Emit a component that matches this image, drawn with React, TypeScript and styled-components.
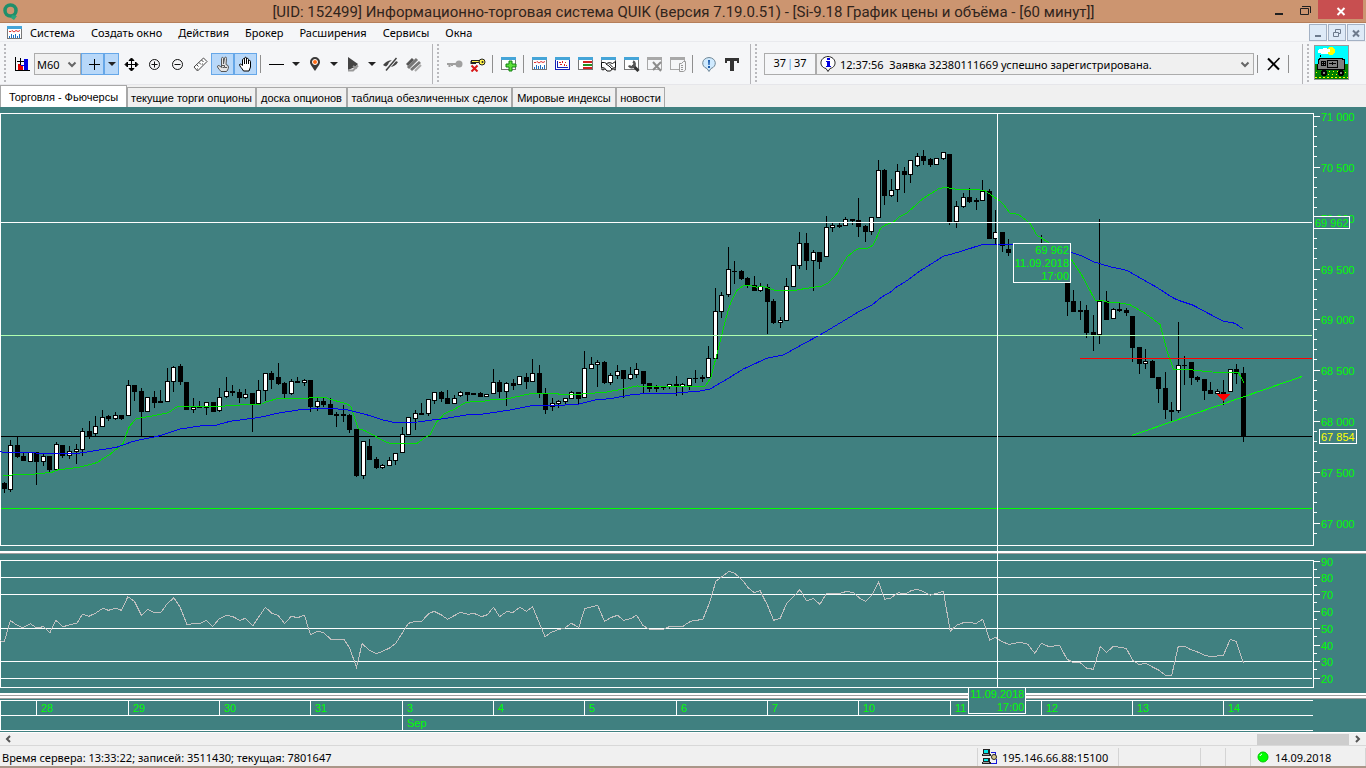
import React from "react";
import styled, { createGlobalStyle, css } from "styled-components";

const teal = "#408080";
const lime = "#00ff00";

const GlobalStyle = createGlobalStyle`
  * { box-sizing: border-box; }
  body { margin: 0; background: #f0f0f0; font-family: "Noto Sans", "Open Sans", sans-serif; font-size: 11px; color: #000; }
  button, select { font: inherit; color: inherit; margin: 0; }
`;

/* ---------- window frame ---------- */

const Window = styled.div`
  display: flex;
  flex-direction: column;
  min-height: 100vh;
  border-bottom: 2px solid #aa9688;
`;

const TitleBar = styled.header`
  display: flex;
  align-items: flex-start;
  height: 23px;
  padding: 0 3px;
  background: #cc9570;
  border-bottom: 1px solid #b57e5a;
`;

const TitleText = styled.h1`
  flex: 1;
  margin: 0;
  padding-left: 82px;
  text-align: center;
  white-space: nowrap;
  font-family: Roboto, "Open Sans", sans-serif;
  font-size: 15px;
  font-weight: 400;
  line-height: 24px;
  color: #30241c;
`;

const LogoIcon = styled.svg`
  width: 16px;
  height: 17px;
  margin-top: 3px;
`;

const CaptionButton = styled.button<{ $close?: boolean }>`
  width: ${(p) => (p.$close ? 45 : 26)}px;
  height: 19px;
  padding: 0;
  border: 0;
  color: ${(p) => (p.$close ? "#fff" : "#202020")};
  background: ${(p) => (p.$close ? "#c84f50" : "transparent")};
  svg { display: block; margin: 0 auto; }
`;

const MenuBar = styled.nav`
  display: flex;
  align-items: center;
  height: 19px;
  padding: 1px 1px 0 7px;
  background: #f5f6f8;
  border-bottom: 1px solid #e9eaee;
`;

const MenuLabel = styled.button`
  padding: 0;
  margin-left: 16px;
  border: 0;
  background: none;
  line-height: 18px;
  white-space: nowrap;
  &:first-of-type { margin-left: 7px; }
`;

const MdiButtons = styled.div`
  display: flex;
  gap: 1px;
  margin-left: auto;
`;

const MdiButton = styled.button`
  width: 18px;
  height: 17px;
  padding: 0;
  border: 1px solid #a3b1c4;
  background: #deeaf7;
  svg { display: block; margin: 0 auto; }
`;

/* ---------- toolbar ---------- */

const ToolBar = styled.div`
  display: flex;
  height: 43px;
  padding-top: 2px;
  background: #f5f6f8;
  border-bottom: 1px solid #e6e6ea;
`;

const ToolGroup = styled.div<{ $grow?: boolean; $last?: boolean }>`
  display: flex;
  align-items: center;
  padding: 0 ${(p) => (p.$last ? 17 : p.$grow ? 9 : 7)}px 0 5px;
  border-right: ${(p) => (p.$last ? 0 : 1)}px solid #b4b4b8;
  flex: ${(p) => (p.$grow ? "1 1 0" : "none")};
  min-width: 0;
`;

const Grip = styled.span`
  flex: none;
  align-self: stretch;
  width: 2px;
  margin: 0 4px 0 -1px;
  background: repeating-linear-gradient(to bottom, #b9b9bd 0 2px, transparent 2px 4px);
`;

const ToolButton = styled.button<{ $active?: boolean; $narrow?: boolean }>`
  flex: none;
  display: flex;
  align-items: center;
  justify-content: center;
  width: ${(p) => (p.$narrow ? 15 : 23)}px;
  height: 22px;
  padding: 0;
  border: 1px solid transparent;
  background: none;
  color: #222;
  ${(p) =>
    p.$active &&
    css`
      background: #b8d8f9;
      border-color: #66a7e8;
    `}
`;

const ToolDivider = styled.span`
  flex: none;
  width: 1px;
  height: 18px;
  margin: 0 4px 0 3px;
  background: #8f8f8f;
`;

const SelectBox = styled.div<{ $wide?: boolean }>`
  display: flex;
  align-items: center;
  flex: ${(p) => (p.$wide ? "1 1 0" : "0 0 47px")};
  min-width: 0;
  height: 22px;
  margin-left: ${(p) => (p.$wide ? 0 : 1)}px;
  padding: 0 3px 0 2px;
  border: 1px solid #acacac;
  background: #f0f0f0;
  select {
    flex: 1;
    min-width: 0;
    height: 20px;
    margin-left: ${(p) => (p.$wide ? 3 : 0)}px;
    padding: 0;
    border: 0;
    appearance: none;
    background: transparent;
  }
  svg { flex: none; }
`;

const Counter = styled.output`
  flex: none;
  width: 52px;
  height: 22px;
  margin-left: 3px;
  border: 1px solid #acacac;
  text-align: center;
  line-height: 18px;
  i { padding: 0 1px; color: #5a9be0; font-style: normal; }
`;

const MascotFrame = styled.div`
  width: 35px;
  height: 35px;
  margin-bottom: 3px;
  margin-left: 1px;
  border: 1px solid #999;
  svg { display: block; }
`;

/* ---------- tabs ---------- */

const TabStrip = styled.div`
  display: flex;
  align-items: flex-end;
  height: 22px;
`;

const Tab = styled.button<{ $w: number; $active?: boolean }>`
  flex: 0 0 ${(p) => p.$w}px;
  height: ${(p) => (p.$active ? 22 : 20)}px;
  padding: 0;
  border: 1px solid #a8a8a8;
  border-bottom: 0;
  background: ${(p) => (p.$active ? "#fff" : "#f0f0f0")};
  font-family: "Liberation Sans", sans-serif;
  font-size: 11px;
  line-height: 20px;
  white-space: nowrap;
`;

/* ---------- chart ---------- */

const ChartArea = styled.main`
  position: relative;
  background: ${teal};
  font-family: "Liberation Sans", sans-serif;
  font-size: 11px;
  color: ${lime};
`;

const Pane = styled.svg`
  display: block;
  width: 100%;
  height: auto;
`;

const Splitter = styled.div`
  height: 3px;
  background: #fff;
  border-bottom: 1px solid #a0a0a0;
`;

const DayRow = styled.div`
  display: grid;
  grid-template-columns: 36fr 92fr 91fr 91fr 92fr 91fr 91fr 92fr 91fr 91fr 92fr 91fr 91fr 91fr 90fr 53fr;
  margin-top: 1px;
`;

const MonthRow = styled.div`
  display: grid;
  grid-template-columns: 402fr 911fr 53fr;
  padding-bottom: 1px;
`;

const DateCell = styled.span<{ $last?: boolean }>`
  min-width: 0;
  height: ${(p) => (p.$last ? 16 : 15)}px;
  padding-left: 4px;
  line-height: 14px;
  border: solid #fff;
  border-width: ${(p) => (p.$last ? "1px 0 1px 1px" : "1px 0 0 1px")};
`;

const CrosshairLine = styled.span`
  position: absolute;
  left: 73%;
  top: 7px;
  bottom: 45px;
  width: 1px;
  background: #fff;
`;

const CrosshairTag = styled.div<{ $axis?: boolean }>`
  position: absolute;
  left: ${(p) => (p.$axis ? "70.9%" : "74.16%")};
  ${(p) => (p.$axis ? "bottom: 18px;" : "top: 136px;")}
  width: 58px;
  padding-right: 1px;
  border: 1px solid #fff;
  background: ${teal};
  text-align: right;
  line-height: 12px;
  span { display: block; }
  span + span { margin-top: 1px; }
`;

/* ---------- bottom ---------- */

const ScrollBar = styled.div`
  display: flex;
  align-items: center;
  height: 13px;
  padding: 0 4px;
  border-top: 1px solid #fff;
`;

const ScrollThumb = styled.span`
  flex: 0 0 92px;
  height: 11px;
  margin-left: auto;
  margin-right: 5px;
  background: #cdcdcd;
`;

const ScrollArrow = styled.button`
  display: flex;
  padding: 0;
  border: 0;
  background: none;
  color: #555;
`;

const StatusBar = styled.footer`
  display: flex;
  flex: 1;
  height: 21px;
  padding-top: 2px;
  border-top: 1px solid #d8d8d8;
`;

const StatusCell = styled.div<{ $w?: number }>`
  display: flex;
  align-items: center;
  gap: 4px;
  flex: ${(p) => (p.$w ? `0 0 ${p.$w}px` : "1 1 0")};
  padding: 0 2px;
  border-right: 1px solid #d4d4d4;
  white-space: nowrap;
`;

const AddressStatus = styled(StatusCell)`
  padding-left: 4px;
`;

const DateStatus = styled(StatusCell)`
  gap: 6px;
  padding-left: 6px;
`;

/* ---------- icons ---------- */

type IconProps = { size?: number; children: React.ReactNode };
const Icon = ({ size = 16, children }: IconProps) => (
  <svg width={size} height={size} viewBox={`0 0 ${size} ${size}`} fill="none" stroke="currentColor" aria-hidden="true">
    {children}
  </svg>
);

const Crisp = ({ children }: { children: React.ReactNode }) => <g shapeRendering="crispEdges" stroke="none">{children}</g>;

const WindowFrame = ({ gray }: { gray?: boolean }) => (
  <Crisp>
    <path fill={gray ? "#a8a8a8" : "#777"} d="M0 1h15v13H0z" />
    <path fill={gray ? "#f5f6f8" : "#fff"} d="M1 4h13v9H1z" />
    <path fill={gray ? "#a8a8a8" : "#45a5d8"} d="M0 1h15v3H0z" />
  </Crisp>
);

const PlotWindow = () => (
  <Icon>
    <WindowFrame />
    <path stroke="#e03030" d="M2 6.500h2l1-1 2 1.500 2-1.500 2 1 2-1" />
    <Crisp>
      <path fill="#1c6fc0" d="M2 11h1v2H2zM4 9h1v4H4zM6 10h1v3H6zM8 9h1v4H8zM10 11h1v2h-1zM12 9h1v4h-1z" />
    </Crisp>
  </Icon>
);

const Caret = () => (
  <Icon size={10}>
    <path d="M1 3h8L5 7z" fill="#222" stroke="none" />
  </Icon>
);

const Chevron = () => (
  <Icon size={10}>
    <path d="M1.500 3.500 5 7l3.500-3.500" stroke="#666" strokeWidth="2" />
  </Icon>
);

const BarsIcon = () => (
  <Icon>
    <Crisp>
      <path fill="#e00000" d="M4 8h3v6H4z" />
      <path fill="#0000e0" d="M10 3h4v11h-4zM7 9h3v1H7z" />
      <path fill="#e00000" d="M7 10h2v4H7z" />
      <path fill="#000" d="M1 1h1v14H1zM1 14h15v1H1zM3 5h7v1H3zM6 2h1v7H6z" />
    </Crisp>
  </Icon>
);

const PlusIcon = () => (
  <Icon>
    <Crisp>
      <path fill="#000" d="M4 8h11v1H4zM9 3h1v11H9z" />
    </Crisp>
  </Icon>
);

const MoveIcon = () => (
  <Icon>
    <path stroke="#000" d="M4 8.500h9M8.500 4v9" />
    <path stroke="#000" d="M4.500 6v5L2 8.500zM12.500 6v5L15 8.500zM6 4.500h5L8.500 2zM6 12.500h5L8.500 15z" fill="#000" />
    <path stroke="#f5f6f8" d="M6 6.500h2M9 6.500h2M6 10.500h2M9 10.500h2" />
  </Icon>
);

const LensIcon = ({ plus }: { plus?: boolean }) => (
  <Icon>
    <circle cx="8.500" cy="8.500" r="5" stroke="#111" />
    <path stroke="#111" d={plus ? "M5.500 8.500h6M8.500 5.500v6" : "M5.500 8.500h6"} />
  </Icon>
);

const RulerIcon = () => (
  <Icon>
    <path stroke="#444" fill="#fff" d="M2 11 11.500 2 15 5.500 5.500 15z" />
    <path stroke="#444" d="M4.500 8.500l2 2M7 6.500l2 2M9.500 4l2 2M5 13h1M10 8h1" />
  </Icon>
);

const FingersIcon = () => (
  <Icon>
    <path fill="#e4e4e4" stroke="#555" d="M6.500 9V2.500c0-1.500 2-1.500 2 0V8l1-6c.5-1.400 2.300-1 2 .5L11 8.500l2 1c1 2 .3 4-1.500 6H6C3.500 12.500 2 11 2.500 10s2-.5 4 1.500z" />
    <path stroke="#555" d="M6.500 9.500h3v2h-2M10 11.500h2" />
  </Icon>
);

const PalmIcon = () => (
  <Icon>
    <path fill="#fff" stroke="#000" d="M5.500 15C4 12 1.500 10.500 1.500 8.500c.8-1 2 0 3 1V3.500c.5-1 1.700-1 2 0V2c.5-1 1.800-1 2 0v1c.5-1 1.800-.8 2 .5V5c.7-1 2-.7 2 .5V11l-1.500 4z" />
    <path stroke="#000" d="M6.500 3.500V8M8.500 3v5M10.500 4.500V8" />
  </Icon>
);

const PinIcon = () => (
  <Icon>
    <path d="M8 15C5 10.500 3 8.500 3 6a5 5 0 0 1 10 0c0 2.500-2 4.500-5 9z" fill="#3a3a3a" stroke="none" />
    <circle cx="8" cy="6" r="2.500" fill="#ff6a13" stroke="#fff" />
  </Icon>
);

const SlopeIcon = () => (
  <Icon>
    <path d="M3 1l10 7-3 3-7 3z" fill="#444" stroke="none" />
    <path d="M3 14.500h5l5-5M8 10l4 2.500" stroke="#999" strokeWidth="2" />
  </Icon>
);

const EyeOffIcon = () => (
  <Icon>
    <path d="M0 9c4-5 9-6 15-3-3 5-9 7-15 3z" fill="#444" stroke="none" />
    <circle cx="7.500" cy="7.500" r="2" fill="#ccc" stroke="none" />
    <path d="M2 15 14 1" stroke="#f5f6f8" strokeWidth="4" />
    <path d="M3 14.500 13.500 2" stroke="#444" strokeWidth="1.500" />
  </Icon>
);

const StripesIcon = () => (
  <Icon>
    <path d="M1 9l6-6" stroke="#555" strokeWidth="3" />
    <path d="M2 12 11 3M5 14l9-8" stroke="#777" strokeWidth="3" />
    <path d="M9 15l6-6" stroke="#aaa" strokeWidth="2" />
  </Icon>
);

const KeyIcon = ({ off }: { off?: boolean }) => (
  <Icon>
    {off ? (
      <>
        <path d="M1 5.500h9M2 5v3M4.500 5v3" stroke="#222" strokeWidth="3" />
        <path d="M2 5.500h9" stroke="#fff24a" />
        <circle cx="12" cy="6" r="3" fill="#fff24a" stroke="#222" />
        <circle cx="12.500" cy="6" r="1" fill="#222" stroke="none" />
        <path d="M1.500 9.500l6 6M7.500 9.500l-6 6" stroke="#d81818" strokeWidth="2" />
      </>
    ) : (
      <>
        <path d="M0 8h10M2.500 8v3M5 8v2" stroke="#a0a0a0" strokeWidth="2" />
        <circle cx="12" cy="8" r="3.500" fill="#a0a0a0" stroke="none" />
      </>
    )}
  </Icon>
);

const AddWindowIcon = () => (
  <Icon>
    <WindowFrame />
    <path d="M8 5h3v3h4v3h-4v4H8v-4H5V8h3z" fill="#5de03a" stroke="#128012" />
  </Icon>
);

const ScatterWindow = () => (
  <Icon>
    <Crisp>
      <path fill="#1520b8" d="M0 1h15v13H0z" />
      <path fill="#fff" d="M1 4h13v9H1z" />
      <path fill="#45a5d8" d="M0 1h15v3H0z" />
      <path fill="#e02020" d="M4 6h2v1H4zM7 5h1v2H7zM5 8h2v1H5zM9 8h1v2H9zM10 6h1v1h-1zM11 9h1v1h-1z" />
      <path fill="#1520b8" d="M2 5h1v7H2zM2 11h11v1H2z" />
    </Crisp>
  </Icon>
);

const QueueWindow = () => (
  <Icon>
    <WindowFrame />
    <Crisp>
      <path fill="#d02020" d="M5 5h9v2H5zM5 11h9v2H5z" />
      <path fill="#209020" d="M5 8h9v2H5z" />
    </Crisp>
  </Icon>
);

const DealsWindow = () => (
  <Icon>
    <WindowFrame />
    <path fill="#fff" stroke="#111" d="M.5 6.500h3l2 1 3-1 3 1 3-2v6l-3 1-2 2.500H6L3.500 12l-3-.5zM5 8l3 2 3 3M8 7.500l4 4M2 12.500v2M14 12.500v2" />
  </Icon>
);

const SettingsWindow = () => (
  <Icon>
    <WindowFrame />
    <path d="M8.500 9l6 6" stroke="#333" strokeWidth="3" />
    <path d="M9 5.500a3 3 0 1 1-4 4" stroke="#555" strokeWidth="2.500" />
  </Icon>
);

const CloseWindowIcon = () => (
  <Icon>
    <WindowFrame gray />
    <path d="M6 6l8 9M14 6l-8 8" stroke="#8c8c8c" strokeWidth="2" />
  </Icon>
);

const CopyWindowIcon = () => (
  <Icon>
    <WindowFrame gray />
    <path d="M9.500 7.500h2l2-2h2V14l-2 1.500h-4z" fill="#f5f6f8" stroke="#999" />
    <path d="M11 9.500h2M11 11.500h2M11 13.500h2" stroke="#999" />
  </Icon>
);

const AlertIcon = () => (
  <Icon>
    <path d="M8 15.500l-2-3C-.5 10.500.500 2 8 1.500c7.500.5 8.500 9 2 11z" fill="#cfeaff" stroke="#6f8796" />
    <path d="M7 4h2l-.4 5H7.400zM7 10h2v2H7z" fill="#1b5cae" stroke="none" />
  </Icon>
);

const InfoIcon = () => (
  <Icon size={18}>
    <path d="M9 16.500l-2-3C-.5 12 .500 2 9 1.500c8.500.5 9.500 10.500 2 12z" fill="#fff" stroke="#222" />
    <Crisp>
      <path fill="#0000e0" d="M8 3h3v2H8zM7 6h4v5h1v1H7v-1h1V7H7z" />
    </Crisp>
  </Icon>
);

const LetterTIcon = () => (
  <Icon>
    <Crisp>
      <path fill="#333" d="M1 2h14v5h-2V5h-3v10H6V5H3v2H1z" />
    </Crisp>
  </Icon>
);

const CrossIcon = () => (
  <Icon>
    <path d="M2 2.500l11 11" stroke="#000" strokeWidth="2" />
    <path d="M13.500 2 2 14" stroke="#000" strokeWidth="1.500" />
  </Icon>
);

const Mascot = () => (
  <svg width="33" height="33" viewBox="0 0 33 33" shapeRendering="crispEdges" aria-hidden="true">
    <path fill="#00ffff" d="M0 0h33v20H0z" />
    <path fill="#008000" d="M0 18h33v15H0z" />
    <circle cx="16" cy="5" r="4" fill="#ffff00" />
    <path fill="#fff" d="M4 3h4V2h4v1h3v3h-2v2H6V7H3V4z" />
    <path fill="#808080" stroke="#000" d="M3.500 13.500h1v-1h23v1h2v10h-27z" />
    <path fill="#808080" stroke="#000" d="M6.500 15.500h4v4h-4zM12.500 14.500h10v7h-10z" />
    <path stroke="#000" d="M8.500 15v5M6 17.500h5M14 17.500h7M17.500 16v3M5 11l1-2" />
    <circle cx="9" cy="27" r="3" fill="#000" />
    <circle cx="26" cy="27" r="3" fill="#000" />
    <path fill="#808080" d="M8 26h2v2H8zM25 26h2v2h-2z" />
    <path stroke="#ffff00" strokeDasharray="2 2" d="M0 31.500h33" />
    <path stroke="#ffff00" strokeDasharray="1 3" d="M13 28.500h10M1 26.500h4M14 25.500h9M30 26.500h3" />
  </svg>
);

const NetworkIcon = () => (
  <Icon>
    <Crisp>
      <path fill="#222" d="M1 0h7v5H1zM0 5h9v2H0zM1 9h7v4H1zM0 13h9v2H0z" />
      <path fill="#00e8e8" d="M2 1h4v3H2zM2 10h4v2H2z" />
      <path fill="#a0a0a0" d="M1 5h6v1H1zM1 13h6v1H1z" />
      <path fill="#1515d8" d="M9 3h4v1H9zM13 3h1v3h-1zM9 14h6v1H9zM14 10h1v4h-1z" />
    </Crisp>
    <circle cx="12" cy="8" r="2.500" fill="#d8c890" stroke="#222" />
  </Icon>
);

/* ---------- chart data ---------- */

type Candle = [high: number, low: number, top: number, bottom: number, up: 0 | 1] | null;
const CANDLES: Candle[] = [
  [482,493,483,489,0],[440,492,445,490,1],[437,458,445,457,0],[452,461,456,461,0],[452,462,452,462,1],[452,485,452,462,0],
  [453,466,456,462,1],[456,472,456,470,0],[442,470,444,470,1],[445,458,445,456,0],[446,459,451,456,1],[444,464,449,452,1],
  [428,456,431,450,1],[421,439,431,437,0],[416,436,426,434,1],[410,427,417,427,1],[415,421,416,419,0],[412,420,415,419,1],
  [415,420,415,419,0],[380,416,385,416,1],[385,401,385,392,0],[388,436,391,412,0],[397,412,397,412,1],[391,408,397,403,0],
  [390,403,401,403,0],[368,402,381,402,1],[366,392,367,382,1],[364,385,366,382,0],[382,410,382,410,0],[398,413,407,410,1],
  [401,408,406,408,0],[402,415,402,408,1],[402,412,402,412,0],[388,412,397,411,1],[377,398,391,397,1],[385,396,391,393,0],
  [389,403,392,398,0],[389,399,394,398,1],[393,432,393,404,0],[380,404,390,404,1],[373,401,373,391,1],[371,389,373,380,0],
  [363,385,377,384,0],[382,398,383,394,0],[379,395,381,394,1],[377,383,381,383,0],[379,386,380,383,1],[380,412,380,407,0],
  [398,411,401,407,1],[398,407,401,405,0],[398,415,404,415,0],[412,427,414,416,0],[405,422,414,416,0],[414,433,415,430,0],
  [429,477,429,476,0],[441,479,441,476,1],[439,460,446,460,0],[457,469,459,468,0],[464,469,465,468,1],[457,466,460,466,1],
  [453,465,453,461,1],[427,453,434,453,1],[417,435,417,435,1],[410,430,413,419,1],[403,415,413,415,0],[399,416,399,414,1],
  [392,404,392,401,1],[391,402,392,399,0],[390,404,398,404,0],[395,404,398,404,1],[391,397,392,396,1],[392,401,392,395,0],
  [393,395,393,395,0],[392,397,393,397,0],[394,397,394,397,1],[369,394,382,394,1],[380,398,382,392,0],[382,406,383,392,1],
  [379,390,383,386,0],[376,385,376,385,1],[373,389,377,382,0],[359,382,373,382,1],[365,398,373,393,0],[388,414,394,410,0],
  [398,411,403,407,1],[400,408,401,404,1],[398,405,398,402,1],[391,399,392,399,1],[392,404,392,399,0],[351,398,368,398,1],
  [357,369,364,369,1],[360,387,362,365,1],[361,384,362,383,0],[373,385,375,383,1],[365,379,371,376,1],[370,398,370,379,0],
  [367,380,374,379,1],[363,378,369,375,1],[371,394,371,384,0],[383,392,383,389,0],[385,392,386,389,0],[386,390,387,388,0],
  [384,389,384,387,1],[376,396,384,386,0],[383,395,384,387,1],[378,390,378,386,1],[370,383,378,379,0],[375,382,377,379,0],
  [346,378,358,378,1],[288,359,311,359,1],[292,318,295,312,1],[247,297,269,295,1],[261,284,271,272,0],[270,280,271,279,0],
  [277,288,278,285,0],[276,291,285,291,0],[283,292,286,291,1],[284,334,287,302,0],[299,324,301,323,0],[317,328,320,323,1],
  [278,321,286,321,1],[265,287,265,287,1],[232,269,243,266,1],[233,270,243,261,0],[250,291,252,261,1],[252,269,252,262,0],
  [216,257,227,257,1],[223,232,225,228,1],[223,228,225,227,0],[217,226,219,226,1],[219,225,219,221,0],[198,237,220,227,0],
  [225,242,226,232,0],[217,235,217,232,1],[160,218,170,218,1],[169,205,170,196,0],[179,197,190,196,1],[164,202,171,190,1],
  [167,193,171,175,0],[160,183,160,175,1],[153,167,156,166,1],[150,165,156,161,0],[158,167,159,165,0],[158,165,158,165,1],
  [152,160,152,159,1],[154,225,154,222,0],[201,228,206,222,1],[193,208,197,207,1],[188,203,197,202,0],[198,210,200,202,0],
  [180,201,191,201,1],[189,239,191,239,0],[210,244,232,239,1],[232,252,232,246,0],[239,256,249,253,0],null,null,null,null,
  [235,250,244,250,0],null,null,null,[276,316,276,302,0],[290,312,301,312,0],[301,320,310,312,0],[305,338,310,333,0],
  [315,351,332,335,0],[219,344,301,335,1],[291,320,301,320,0],[308,319,309,319,1],[302,312,309,311,0],[308,316,310,313,0],
  [316,362,316,348,0],[347,374,347,364,0],[349,369,361,364,1],[360,378,361,378,0],[377,403,377,389,0],[372,419,388,410,0],
  [402,421,410,412,0],[322,413,365,411,1],[356,385,365,366,0],[362,385,362,378,0],[376,382,377,380,0],[379,400,379,391,0],
  [382,394,390,394,0],[389,394,391,394,1],[380,405,392,396,0],[369,392,369,392,1],[364,384,369,374,0],[367,442,373,437,0],
];

/* Each run is stored relative to its own origin and expanded to chart units. */
const run = (x0: number, y0: number, sx: number, sy: number, flat: number[]) => {
  const out: string[] = [];
  for (let i = 0; i < flat.length; i += 2) out.push(`${(x0 + flat[i] / sx).toFixed(1)},${(y0 + flat[i + 1] / sy).toFixed(1)}`);
  return out.join(" ");
};

const FAST_AVERAGE = [
  run(0, 350, 3, 3, [10,377,48,374,105,372,155,367,175,359,205,356,245,350,290,338,330,313,370,280,378,255,388,230,408,206,455,198,505,188,530,171,560,169,660,169,720,165,785,162,800,155,835,145,905,145,975,142]),
  run(330, 340, 3, 3, [0,178,50,191,63,200,85,266,105,272,165,305,185,311,262,310,282,294,300,285,320,245,345,220,375,207,402,190,430,184,460,184,490,178,525,178,560,170,605,160,675,160,690,163,745,163,795,159,830,156,880,147,920,138]),
  run(660, 140, 3, 3, [0,739,135,739,152,715,170,645,195,545,212,487,230,452,250,437,270,436,290,442,305,438,345,451,405,451,440,445,487,438,505,428,530,402,562,350,585,331,600,325,622,325,640,315,662,264,680,253,700,247,718,230,742,218,790,175,835,147,855,142,890,148]),
  run(960, 170, 3, 3, [0,58,45,58,75,62,125,97,150,129,175,133,210,160,230,195,265,217,333,267,365,315,405,390,430,392,445,397,475,398,510,404,555,430,600,463,622,545,640,597,690,599,755,606,835,607,853,640]),
].join(" ");

const SLOW_AVERAGE = [
  run(0, 350, 3, 3, [0,304,10,307,95,307,115,310,235,310,350,292,400,274,480,257,540,237,600,228,650,225,690,214,780,202,840,188,910,178,975,175]),
  run(330, 340, 3, 3, [0,205,50,209,100,221,160,240,190,247,265,246,300,241,350,235,420,223,460,222,540,210,610,196,690,196,745,193,800,179,840,176,900,165,950,160]),
  run(660, 140, 3, 3, [0,760,40,760,120,753,150,747,200,718,250,687,320,655,370,645,420,617,480,585,560,537,600,513,635,496,665,471,695,454,710,440,735,426,780,393,850,349,900,335,965,314]),
  run(960, 170, 3, 3, [158,223,333,247,365,258,400,275,450,290,500,301,530,318,590,352,630,378,650,389,700,406,750,433,790,453,825,460,848,476]),
].join(" ");

const RSI = [
  run(0, 550, 2.306, 3, [0,272,10,275,24,211,37,224,53,233,70,221,84,233,101,230,115,248,129,211,145,230,178,219,190,193,205,199,222,188,237,175,250,181,267,175,280,181,295,140,310,154,326,196,341,178,355,187,371,187,385,162,401,143,415,171,431,223,462,220,476,211,490,230,506,206,522,196,537,200,553,211,566,205,583,227,612,172,627,190,641,196,656,220,672,199,686,203,702,196,716,254,732,244,745,247,763,268,793,268,806,293,822,352,835,281,852,301,868,311,884,303,897,295,912,281,942,220,958,214,972,214,989,191,1001,184,1017,194,1032,208,1062,187,1079,193,1093,190,1110,200,1124,194,1138,172,1152,200,1168,185,1183,187,1199,172,1214,184,1228,170,1257,260,1270,248,1287,239,1302,235,1317,220,1335,232,1348,176,1378,166,1394,214,1408,203,1424,196,1438,211,1454,206,1468,196,1483,227,1498,238,1530,238,1545,229]),
  run(680, 550, 2.286, 3, [0,230,8,228,20,217,33,211,52,209,67,160,82,94,97,79,112,64,125,70,143,91,155,112,170,128,183,122,200,166,214,211,229,205,244,160,260,139,274,119,289,152,305,146,320,163,335,130,367,130,381,124,397,128,412,146,424,154,439,135,454,97,468,148,482,144,499,128,516,132,528,122,543,118,557,125,572,136,602,124,618,244,632,226,650,217,677,220,692,208,708,271,721,262,736,275,752,283,778,277,795,283,811,310,826,280,842,289,868,287,885,328,900,338,915,338,930,355,945,358,961,289,975,307,991,289,1020,295,1035,331,1050,344,1064,340,1095,361,1110,376,1124,376,1139,289,1153,289,1168,299,1185,307,1200,316,1215,320,1242,316,1258,268,1271,274,1288,338]),
].join(" ");

const PRICE_LABELS: [string, number][] = [
  ["71 000", 116], ["70 500", 167], ["70 000", 218], ["69 500", 269], ["69 000", 319],
  ["68 500", 370], ["68 000", 421], ["67 500", 472], ["67 000", 523],
];
const RSI_LABELS: [string, number][] = [
  ["90", 561], ["80", 577], ["70", 594], ["60", 611], ["50", 628], ["40", 645], ["30", 661], ["20", 678],
];
const DAYS = ["", "28", "29", "30", "31", "3", "4", "5", "6", "7", "10", "11", "12", "13", "14"];

const PricePane = () => (
  <Pane viewBox="0 107 1366 444" shapeRendering="crispEdges">
    <path d="M1312.500 113.500H.5v432h1313v-432z" fill="none" stroke="#fff" />
    {PRICE_LABELS.map(([label, y]) => (
      <g key={label}>
        <path d={`M1314 ${y}h6v1h-6z`} fill="#fff" />
        {[10, 20, 30, 40].filter((d) => y + d < 540).map((d) => (
          <path key={d} d={`M1314 ${y + d}h3v1h-3z`} fill="#fff" />
        ))}
        <text x="1321" y={y + 5} fill={lime}>{label}</text>
      </g>
    ))}
    <path d="M1 436h1311v1H1z" fill="#000" />
    <path d="M1 508h1311v1H1z" fill={lime} />
    {CANDLES.map((c, i) => {
      if (!c) return null;
      const x = Math.floor(4.3 + 6.522 * i);
      const [high, low, top, bottom, up] = c;
      return (
        <g key={i}>
          <path d={`M${x} ${high}h1V${low}h-1z`} fill="#000" />
          <path d={`M${x - 2} ${top}h5V${bottom}h-5z`} fill="#000" />
          {up === 1 && <path d={`M${x - 1} ${top + 1}h3V${bottom - 1}h-3z`} fill="#fff" />}
        </g>
      );
    })}
    <polyline points={FAST_AVERAGE} fill="none" stroke="#00e000" />
    <polyline points={SLOW_AVERAGE} fill="none" stroke="#0000f0" />
    <path d="M1 222h1311v1H1z" fill="#fff" />
    <path d="M1 335h1311v1H1z" fill="#b0ffb0" />
    <path d="M1080 358h232v1h-232z" fill="#f00" />
    <path d="M1132 435.500 1302 376.500" stroke={lime} />
    <path d="M1216 394h14l-6.500 7z" fill="#f00" />
    <path d="M1313.500 216.500h36v12h-36z" fill={teal} stroke="#fff" />
    <text x="1315" y="227" fill={lime}>69 962</text>
    <path d="M1319.500 429.500h37v14h-37z" fill={teal} stroke="#fff" />
    <text x="1321" y="441" fill="#ffff00">67 854</text>
  </Pane>
);

const RsiPane = () => (
  <Pane viewBox="0 554 1366 139" shapeRendering="crispEdges">
    <path d="M.5 560.500h1313v127H.5z" fill="none" stroke="#fff" />
    <path d="M1 577.500h1311M1 594.500h1311M1 628.500h1311M1 661.500h1311M1 678.500h1311" stroke="#fff" />
    {RSI_LABELS.map(([label, y]) => (
      <g key={label}>
        <path d={`M1314 ${y}h6v1h-6z`} fill="#fff" />
        {y < 678 && <path d={`M1314 ${y + 8}h3v1h-3z`} fill="#fff" />}
        <text x="1321" y={y + 5} fill={lime}>{label}</text>
      </g>
    ))}
    <polyline points={RSI} fill="none" stroke="#c0c0c0" />
  </Pane>
);

/* ---------- page ---------- */

const MENU = ["Система", "Создать окно", "Действия", "Брокер", "Расширения", "Сервисы", "Окна"];
const TABS: [string, number][] = [
  ["Торговля - Фьючерсы", 127], ["текущие торги опционы", 129], ["доска опционов", 91],
  ["таблица обезличенных сделок", 165], ["Мировые индексы", 104], ["новости", 49],
];

export default function App() {
  return (
    <Window>
      <GlobalStyle />
      <TitleBar>
        <LogoIcon viewBox="0 0 16 17" aria-hidden="true">
          <circle cx="7.500" cy="7.500" r="5.500" fill="none" stroke="#1f8f6b" strokeWidth="3.500" />
          <path d="M9 12l5 1-3 4-3-2z" fill="#2aa57c" />
        </LogoIcon>
        <TitleText>[UID: 152499] Информационно-торговая система QUIK (версия 7.19.0.51) - [Si-9.18 График цены и объёма - [60 минут]]</TitleText>
        <CaptionButton aria-label="Свернуть">
          <Icon><path d="M4 12h8" strokeWidth="2" /></Icon>
        </CaptionButton>
        <CaptionButton aria-label="Восстановить">
          <Icon><path d="M5 4.500h8.500V11M3.500 6.500h8v6h-8z" /></Icon>
        </CaptionButton>
        <CaptionButton $close aria-label="Закрыть">
          <Icon><path d="M4.500 6l7 7M11.500 6l-7 7" strokeWidth="2" /></Icon>
        </CaptionButton>
      </TitleBar>

      <MenuBar>
        <PlotWindow />
        {MENU.map((m) => <MenuLabel key={m}>{m}</MenuLabel>)}
        <MdiButtons>
          <MdiButton aria-label="Свернуть окно"><Icon size={14}><path d="M4 10h6" stroke="#6d7b8d" strokeWidth="2" /></Icon></MdiButton>
          <MdiButton aria-label="Восстановить окно"><Icon size={14}><path d="M5.500 6V3.500h5v4H9M3.500 6.500h5v4h-5z" stroke="#6d7b8d" /></Icon></MdiButton>
          <MdiButton aria-label="Закрыть окно"><Icon size={14}><path d="M4 4.500l6 6M10 4.500l-6 6" stroke="#6d7b8d" strokeWidth="2" /></Icon></MdiButton>
        </MdiButtons>
      </MenuBar>

      <ToolBar>
        <ToolGroup>
          <Grip />
          <ToolButton aria-label="График"><BarsIcon /></ToolButton>
          <SelectBox>
            <select aria-label="Интервал"><option>M60</option></select>
            <Chevron />
          </SelectBox>
          <ToolButton $active aria-label="Перекрестие"><PlusIcon /></ToolButton>
          <ToolButton $active $narrow aria-label="Вид курсора"><Caret /></ToolButton>
          <ToolButton aria-label="Переместить"><MoveIcon /></ToolButton>
          <ToolButton aria-label="Увеличить"><LensIcon plus /></ToolButton>
          <ToolButton aria-label="Уменьшить"><LensIcon /></ToolButton>
          <ToolButton aria-label="Линейка"><RulerIcon /></ToolButton>
          <ToolButton $active aria-label="Выбор"><FingersIcon /></ToolButton>
          <ToolButton $active aria-label="Рука"><PalmIcon /></ToolButton>
          <ToolDivider />
          <ToolButton aria-label="Линия"><Icon><path d="M0 8.500h15" stroke="#000" /></Icon></ToolButton>
          <ToolButton $narrow aria-label="Виды линий"><Caret /></ToolButton>
          <ToolButton aria-label="Метка"><PinIcon /></ToolButton>
          <ToolButton $narrow aria-label="Виды меток"><Caret /></ToolButton>
          <ToolButton aria-label="Фигура"><SlopeIcon /></ToolButton>
          <ToolButton $narrow aria-label="Виды фигур"><Caret /></ToolButton>
          <ToolButton aria-label="Скрыть"><EyeOffIcon /></ToolButton>
          <ToolButton aria-label="Удалить линии"><StripesIcon /></ToolButton>
        </ToolGroup>
        <ToolGroup>
          <Grip />
          <ToolButton aria-label="Подключить"><KeyIcon /></ToolButton>
          <ToolButton aria-label="Отключить"><KeyIcon off /></ToolButton>
          <ToolDivider />
          <ToolButton aria-label="Создать окно"><AddWindowIcon /></ToolButton>
          <ToolDivider />
          <ToolButton aria-label="График цены"><PlotWindow /></ToolButton>
          <ToolButton aria-label="Точки"><ScatterWindow /></ToolButton>
          <ToolButton aria-label="Котировки"><QueueWindow /></ToolButton>
          <ToolButton aria-label="Сделки"><DealsWindow /></ToolButton>
          <ToolButton aria-label="Настройки"><SettingsWindow /></ToolButton>
          <ToolButton aria-label="Закрыть таблицу"><CloseWindowIcon /></ToolButton>
          <ToolButton aria-label="Копировать"><CopyWindowIcon /></ToolButton>
          <ToolDivider />
          <ToolButton aria-label="Оповещения"><AlertIcon /></ToolButton>
          <ToolButton aria-label="Текст"><LetterTIcon /></ToolButton>
        </ToolGroup>
        <ToolGroup $grow>
          <Grip />
          <Counter>37<i>|</i>37</Counter>
          <SelectBox $wide>
            <InfoIcon />
            <select aria-label="Сообщения"><option>12:37:56&nbsp; Заявка 32380111669 успешно зарегистрирована.</option></select>
            <Chevron />
          </SelectBox>
          <ToolDivider />
          <ToolButton aria-label="Очистить"><CrossIcon /></ToolButton>
          <ToolDivider />
        </ToolGroup>
        <ToolGroup $last>
          <Grip />
          <MascotFrame><Mascot /></MascotFrame>
        </ToolGroup>
      </ToolBar>

      <TabStrip role="tablist">
        {TABS.map(([label, w], i) => (
          <Tab key={label} role="tab" aria-selected={i === 0} $w={w} $active={i === 0}>{label}</Tab>
        ))}
      </TabStrip>

      <ChartArea>
        <PricePane />
        <Splitter />
        <RsiPane />
        <Splitter />
        <Splitter />
        <DayRow>
          {DAYS.map((d) => <DateCell key={d}>{d}</DateCell>)}
        </DayRow>
        <MonthRow>
          <DateCell $last />
          <DateCell $last>Sep</DateCell>
        </MonthRow>
        <CrosshairLine />
        <CrosshairTag><span>69 962</span><span>11.09.2018</span><span>17:00</span></CrosshairTag>
        <CrosshairTag $axis><span>11.09.2018</span><span>17:00</span></CrosshairTag>
      </ChartArea>

      <ScrollBar>
        <ScrollArrow aria-label="Назад"><Icon size={8}><path d="M6 1 3 4l3 3" strokeWidth="2" /></Icon></ScrollArrow>
        <ScrollThumb />
        <ScrollArrow aria-label="Вперёд"><Icon size={8}><path d="M2 1l3 3-3 3" strokeWidth="2" /></Icon></ScrollArrow>
      </ScrollBar>

      <StatusBar>
        <StatusCell>Время сервера: 13:33:22; записей: 3511430; текущая: 7801647</StatusCell>
        <AddressStatus $w={141}><NetworkIcon />195.146.66.88:15100</AddressStatus>
        <StatusCell $w={82} />
        <StatusCell $w={25} />
        <StatusCell $w={25} />
        <DateStatus $w={115}>
          <Icon size={12}>
            <circle cx="6" cy="6" r="5" fill={lime} stroke="#00c800" />
            <path d="M3 5a3 3 0 0 1 2-2" stroke="#fff" />
          </Icon>
          14.09.2018
        </DateStatus>
      </StatusBar>
    </Window>
  );
}
